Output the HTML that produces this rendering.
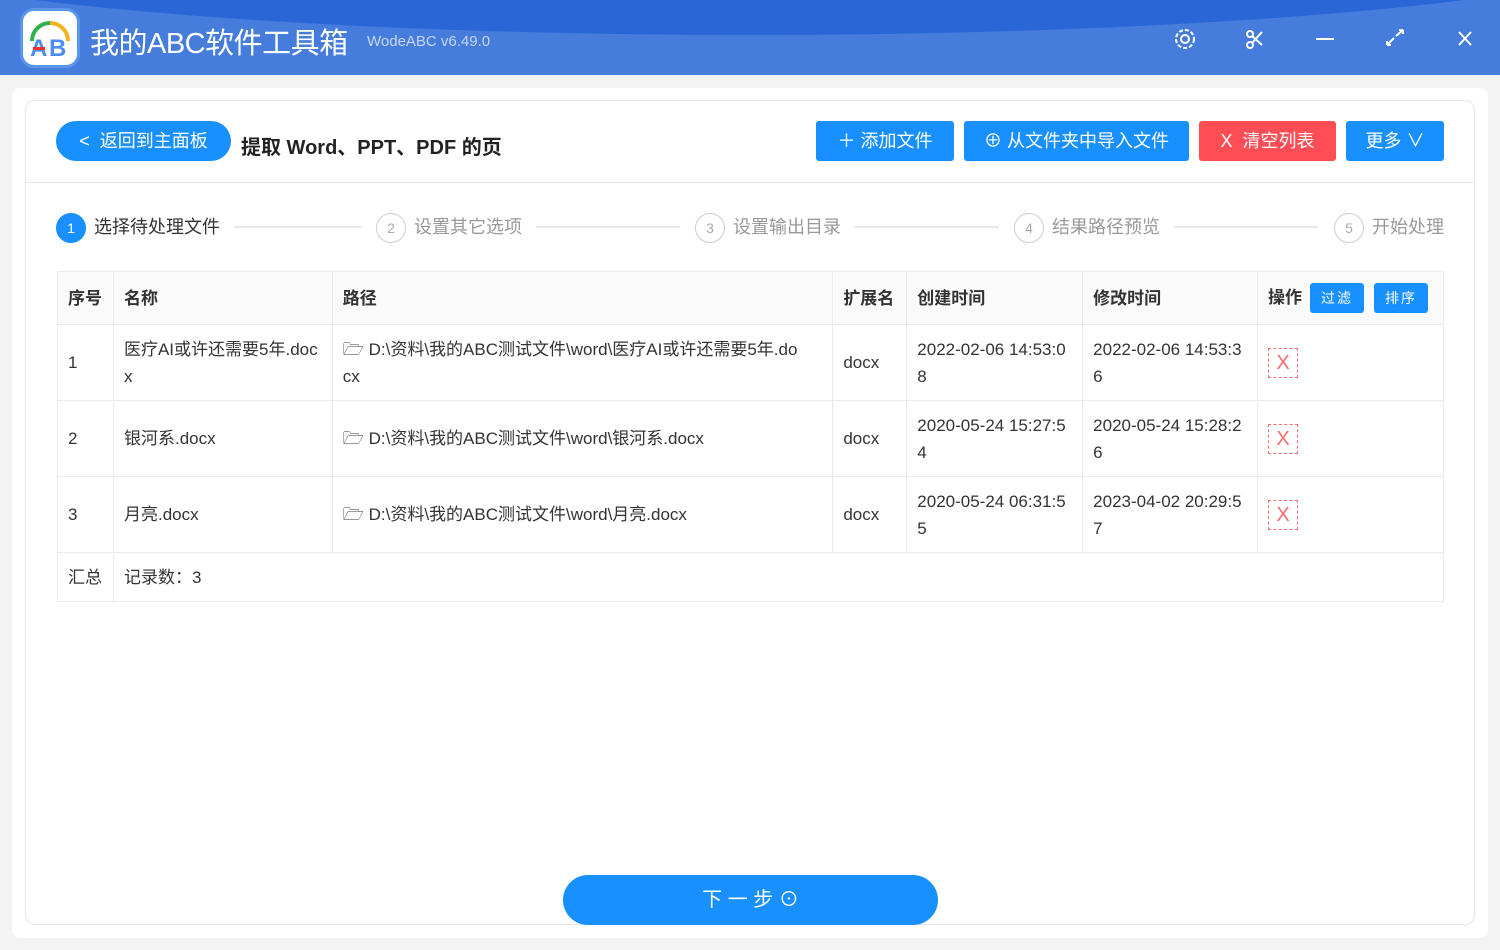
<!DOCTYPE html>
<html><head><meta charset="utf-8"><style>
*{margin:0;padding:0;box-sizing:border-box}
body{width:1500px;height:950px;overflow:hidden;background:#f3f3f3;font-family:"Liberation Sans","Noto Sans CJK SC",sans-serif;color:#333;position:relative}
.abs{position:absolute}
.top{left:0;top:0;width:1500px;height:75px;background:#467ddd;overflow:hidden}
.top:before{content:"";position:absolute;left:-200px;top:-170px;width:1900px;height:205px;border-radius:50%;background:#2a66d6}
.logo{left:20px;top:8px;width:60px;height:60px;border-radius:14px;background:#fff;border:3px solid #5a95ee}
.title{left:90px;top:20px;font-size:29px;color:#fff;letter-spacing:-0.5px}
.ver{left:367px;top:33px;font-size:15px;color:#c7d6f3}
.card{left:12px;top:88px;width:1476px;height:850px;background:#fff;border-radius:8px}
.panel{left:25px;top:100px;width:1450px;height:825px;border:1px solid #e6e6e6;border-radius:10px}
.btn{height:40px;line-height:40px;color:#fff;font-size:18px;text-align:center;border-radius:3px;background:#1890ff}
.step{top:213px;font-size:18px;color:#999}
.circ{display:inline-block;width:30px;height:30px;border-radius:50%;border:1px solid #ccc;text-align:center;line-height:28px;font-size:14px;color:#aaa;vertical-align:middle;margin-right:8px}
.line{top:226px;height:2px;background:#e8e8e8}
table{position:absolute;left:57px;top:271px;width:1387px;border-collapse:collapse;font-size:17px}
td{border:1px solid #ebebeb;padding:0 10px;vertical-align:middle;line-height:27px}
tr.h td{background:#fafafa;font-weight:bold;height:53px}
tr.r td{height:76px}
tr.f td{height:49px}
.sb{display:inline-block;background:#1890ff;color:#fff;font-size:14px;font-weight:normal;width:54px;height:30px;line-height:30px;text-align:center;border-radius:3px;margin-left:8px;letter-spacing:2px}
.del{display:inline-block;width:30px;height:30px;border:1px dashed #f56c6c;color:#f56c6c;text-align:center;line-height:28px;font-size:20px}
</style></head><body>
<div class="abs top"></div>
<div class="abs logo"><svg width="54" height="54" viewBox="0 0 54 54"><path d="M9 30 A18 18 0 0 1 27 12" stroke="#2db34a" stroke-width="4" fill="none"/><path d="M27 12 A18 18 0 0 1 45 30" stroke="#f5b41f" stroke-width="4" fill="none"/><text x="7" y="45" font-size="24" font-family="Liberation Sans" fill="#4a8ef0" font-weight="bold">A</text><text x="26" y="45" font-size="24" font-family="Liberation Sans" fill="#4a8ef0" font-weight="bold">B</text><rect x="10" y="36" width="12" height="3" fill="#e33"/></svg></div>
<div class="abs title">我的ABC软件工具箱</div>
<div class="abs ver">WodeABC v6.49.0</div>
<svg class="abs" style="left:1170px;top:25px" width="310" height="30" fill="none" stroke="#fff" stroke-width="2">
<circle cx="15" cy="14" r="4"/><circle cx="15" cy="14" r="9" stroke-dasharray="4 2"/>
<circle cx="80" cy="9" r="3"/><circle cx="80" cy="20" r="3"/><path d="M82 11 L92 20 M82 18 L92 7"/>
<path d="M146 14 H164"/>
<path d="M217 20 L224 13 M226 11 L233 5 M217 20 v-4 M217 20 h4 M233 5 v4 M233 5 h-4"/>
<path d="M289 7 L301 20 M301 7 L289 20"/></svg>
<div class="abs card"></div>
<div class="abs panel"></div>
<div class="abs btn" style="left:56px;top:121px;width:175px;border-radius:20px;font-size:18px">&lt;&nbsp; 返回到主面板</div>
<div class="abs" style="left:241px;top:131px;font-size:20px;font-weight:bold;color:#222">提取 Word、PPT、PDF 的页</div>
<div class="abs btn" style="left:816px;top:121px;width:138px">＋ 添加文件</div>
<div class="abs btn" style="left:964px;top:121px;width:225px">⊕ 从文件夹中导入文件</div>
<div class="abs btn" style="left:1199px;top:121px;width:137px;background:#ff4d55">X&nbsp; 清空列表</div>
<div class="abs btn" style="left:1346px;top:121px;width:98px">更多 ∨</div>
<div class="abs" style="left:26px;top:182px;width:1448px;height:1px;background:#e8e8e8"></div>
<div class="abs step" style="left:56px;color:#333"><span class="circ" style="background:#1890ff;border-color:#1890ff;color:#fff">1</span>选择待处理文件</div>
<div class="abs line" style="left:234px;width:127px"></div>
<div class="abs step" style="left:376px"><span class="circ">2</span>设置其它选项</div>
<div class="abs line" style="left:536px;width:144px"></div>
<div class="abs step" style="left:695px"><span class="circ">3</span>设置输出目录</div>
<div class="abs line" style="left:855px;width:144px"></div>
<div class="abs step" style="left:1014px"><span class="circ">4</span>结果路径预览</div>
<div class="abs line" style="left:1174px;width:144px"></div>
<div class="abs step" style="left:1334px"><span class="circ">5</span>开始处理</div>
<table>
<colgroup><col style="width:56px"><col style="width:219px"><col style="width:501px"><col style="width:74px"><col style="width:176px"><col style="width:175px"><col style="width:186px"></colgroup>
<tr class="h"><td>序号</td><td>名称</td><td>路径</td><td>扩展名</td><td>创建时间</td><td>修改时间</td><td>操作<span class="sb">过滤</span><span class="sb" style="margin-left:10px">排序</span></td></tr>
<tr class="r"><td>1</td><td>医疗AI或许还需要5年.doc<br>x</td><td>🗁 D:\资料\我的ABC测试文件\word\医疗AI或许还需要5年.do<br>cx</td><td>docx</td><td>2022-02-06 14:53:0<br>8</td><td>2022-02-06 14:53:3<br>6</td><td><span class="del">X</span></td></tr>
<tr class="r"><td>2</td><td>银河系.docx</td><td>🗁 D:\资料\我的ABC测试文件\word\银河系.docx</td><td>docx</td><td>2020-05-24 15:27:5<br>4</td><td>2020-05-24 15:28:2<br>6</td><td><span class="del">X</span></td></tr>
<tr class="r"><td>3</td><td>月亮.docx</td><td>🗁 D:\资料\我的ABC测试文件\word\月亮.docx</td><td>docx</td><td>2020-05-24 06:31:5<br>5</td><td>2023-04-02 20:29:5<br>7</td><td><span class="del">X</span></td></tr>
<tr class="f"><td>汇总</td><td colspan="6" style="border-left:1px solid #ebebeb">记录数：3</td></tr>
</table>
<div class="abs btn" style="left:563px;top:875px;width:375px;height:50px;line-height:50px;border-radius:25px;font-size:20px">下 一 步 ⊙</div>
</body></html>
